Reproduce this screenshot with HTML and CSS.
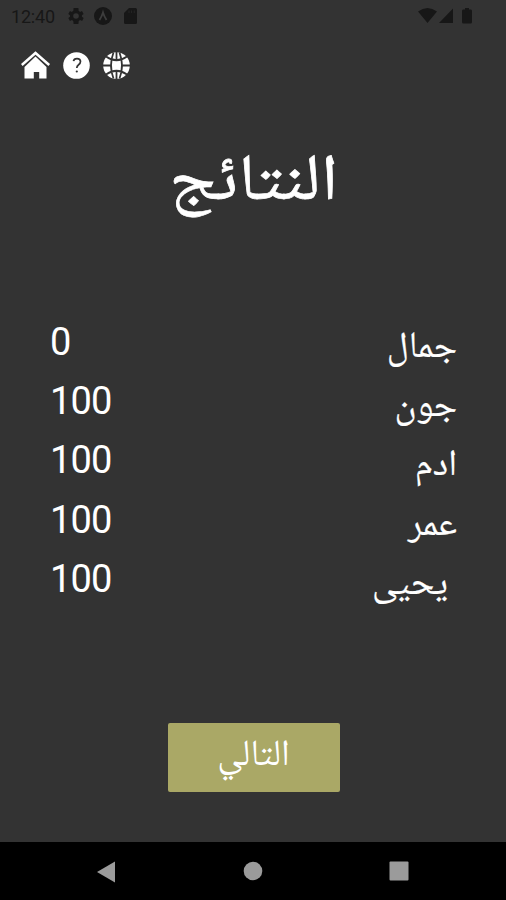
FILE: index.html
```html
<!DOCTYPE html>
<html lang="ar">
<head>
<meta charset="utf-8">
<title>النتائج</title>
<link rel="stylesheet" href="styles.css">
</head>
<body>
<div class="screen">
  <header class="status">
    <span class="clock">12:40</span>
    <svg class="gear" viewBox="2 2 20 20" width="16" height="16"><path fill-rule="evenodd" d="M19.4 13a7.500 7.500 0 0 0 0-2l2.100-1.650-2-3.460-2.500 1a7.500 7.500 0 0 0-1.700-1L15 2H9l-.4 3.900a7.500 7.500 0 0 0-1.700 1l-2.500-1-2 3.460L4.500 11a7.500 7.500 0 0 0 0 2l-2.100 1.650 2 3.460 2.500-1a7.500 7.500 0 0 0 1.700 1L9 22h6l.4-3.900a7.500 7.500 0 0 0 1.700-1l2.500 1 2-3.460zM12 8.500a3.500 3.500 0 1 1 0 7 3.500 3.500 0 0 1 0-7z"/></svg>
    <svg class="expo" viewBox="0 0 18 18" width="18" height="18"><circle cx="9" cy="9" r="9"/><path d="M5.500 13Q8 9 9 5.500Q10 9 12.500 13" fill="none" stroke="#3d3d3d" stroke-width="1.800"/></svg>
    <svg class="card" viewBox="0 0 13 16" width="13" height="16"><path d="M5 0h6.500Q13 0 13 1.500v13Q13 16 11.500 16h-10Q0 16 0 14.500V5z"/><path d="M5 2.500v2.500M7.600 2.500v2.500M10.200 2.500v2.500" stroke="#262626" stroke-width="1"/></svg>
    <svg class="signals" viewBox="0 0 56 18" width="56" height="18"><path d="M0 4.500Q9.500-2.500 19 4.500L9.500 16zM21 16L35 1.500V16zM45 2.500h2V1h4v1.500h2Q54 2.500 54 4v11Q54 16.500 52.500 16.500h-7Q44 16.500 44 15V4Q44 2.500 45 2.500z"/></svg>
  </header>
  <nav class="tools">
    <svg viewBox="0 0 30 28" width="30" height="28"><path d="M.8 14L14.500 2l13.700 12" fill="none" stroke="#fff" stroke-width="2.500"/><path d="M3.500 16L14.500 5.600l11 10.400V27.500h-7.300v-6.500h-5.400v6.500H3.500z"/></svg>
    <svg viewBox="0 0 28 28" width="28" height="28"><circle cx="13.500" cy="14.500" r="13.300"/><path d="M10.500 10.200Q10.800 7.600 14 7.600Q17.500 7.600 17.500 10.600Q17.500 12.300 15.600 13.700Q13.800 15 13.800 17" fill="none" stroke="#333" stroke-width="1.700"/><circle cx="13.800" cy="20.500" r="1.100" fill="#333"/></svg>
    <svg viewBox="0 0 28 28" width="28" height="28"><circle cx="13.500" cy="14.500" r="13.300"/><path d="M13.500 1v8M13.500 20v8M0 14.500h8.500M18.500 14.500h9M3 5.500Q13.500 13 24 5.500M3 23.500Q13.500 16 24 23.500M10.500 1.500Q5.500 14.500 10.500 27.500M16.500 1.500Q21.500 14.500 16.500 27.500" fill="none" stroke="#333" stroke-width="1.800"/></svg>
  </nav>
  <h1 dir="rtl"><span>النتائج</span></h1>
  <ul class="scores">
    <li><span class="score">0</span><span class="name" dir="rtl">جمال</span></li>
    <li><span class="score">100</span><span class="name" dir="rtl">جون</span></li>
    <li><span class="score">100</span><span class="name" dir="rtl">ادم</span></li>
    <li><span class="score">100</span><span class="name" dir="rtl">عمر</span></li>
    <li><span class="score">100</span><span class="name spaced" dir="rtl">يحيى</span></li>
  </ul>
  <button class="next" dir="rtl"><span>التالي</span></button>
  <footer class="navbar">
    <svg viewBox="0 0 20 22" width="20" height="22"><path d="M0 11L18 .5v21z"/></svg>
    <svg viewBox="0 0 20 20" width="20" height="20"><circle cx="10" cy="10" r="9.300"/></svg>
    <svg viewBox="0 0 20 20" width="20" height="20"><rect x=".5" y=".5" width="19" height="19" rx="1"/></svg>
  </footer>
</div>
</body>
</html>
```
FILE: styles.css
```css
* { box-sizing: border-box; }
body { margin: 0; background: #333; color: #fff; font-family: Roboto, "Noto Naskh Arabic", "Noto Sans Arabic", sans-serif; }
svg { display: block; flex: none; }
.screen { width: 506px; height: 900px; display: flex; flex-direction: column; overflow: hidden; }
.status { height: 32px; display: flex; align-items: center; padding: 0 32px 0 11px; color: #171717; fill: #171717; }
.clock { width: 57px; font-size: 18px; letter-spacing: -.2px; }
.expo { margin-left: 10px; }
.card { margin-left: 12px; }
.signals { margin-left: auto; }
.tools { height: 68px; padding: 19px 0 0 21px; display: flex; gap: 12px; fill: #fff; }
h1 { margin: 0; height: 208px; padding: 37px 0 0 2px; text-align: center; font-size: 65px; line-height: 80px; font-weight: 400; }
h1 span { display: inline-block; transform: scaleX(1.135); -webkit-text-stroke: .7px #fff; }
.scores { list-style: none; margin: 0; padding: 4.500px 49px 0 50px; height: 415px; }
.scores li { height: 59.200px; display: flex; justify-content: space-between; align-items: center; }
.score { font-size: 38px; letter-spacing: -.8px; }
.name { font-size: 37px; padding-top: 13px; -webkit-text-stroke: .2px #fff; }
.spaced { margin-right: 9px; }
.next { flex: none; align-self: center; width: 172px; height: 69px; margin-left: 1px; padding: 0 0 9px; border: 0; border-radius: 2px; background: #aaa866; color: #fff; font-family: inherit; font-size: 37px; line-height: 60px; }
.navbar { margin-top: auto; height: 58px; background: #000; fill: #9b9b9b; display: flex; justify-content: space-between; padding: 19px 97px 0 97px; }
```
